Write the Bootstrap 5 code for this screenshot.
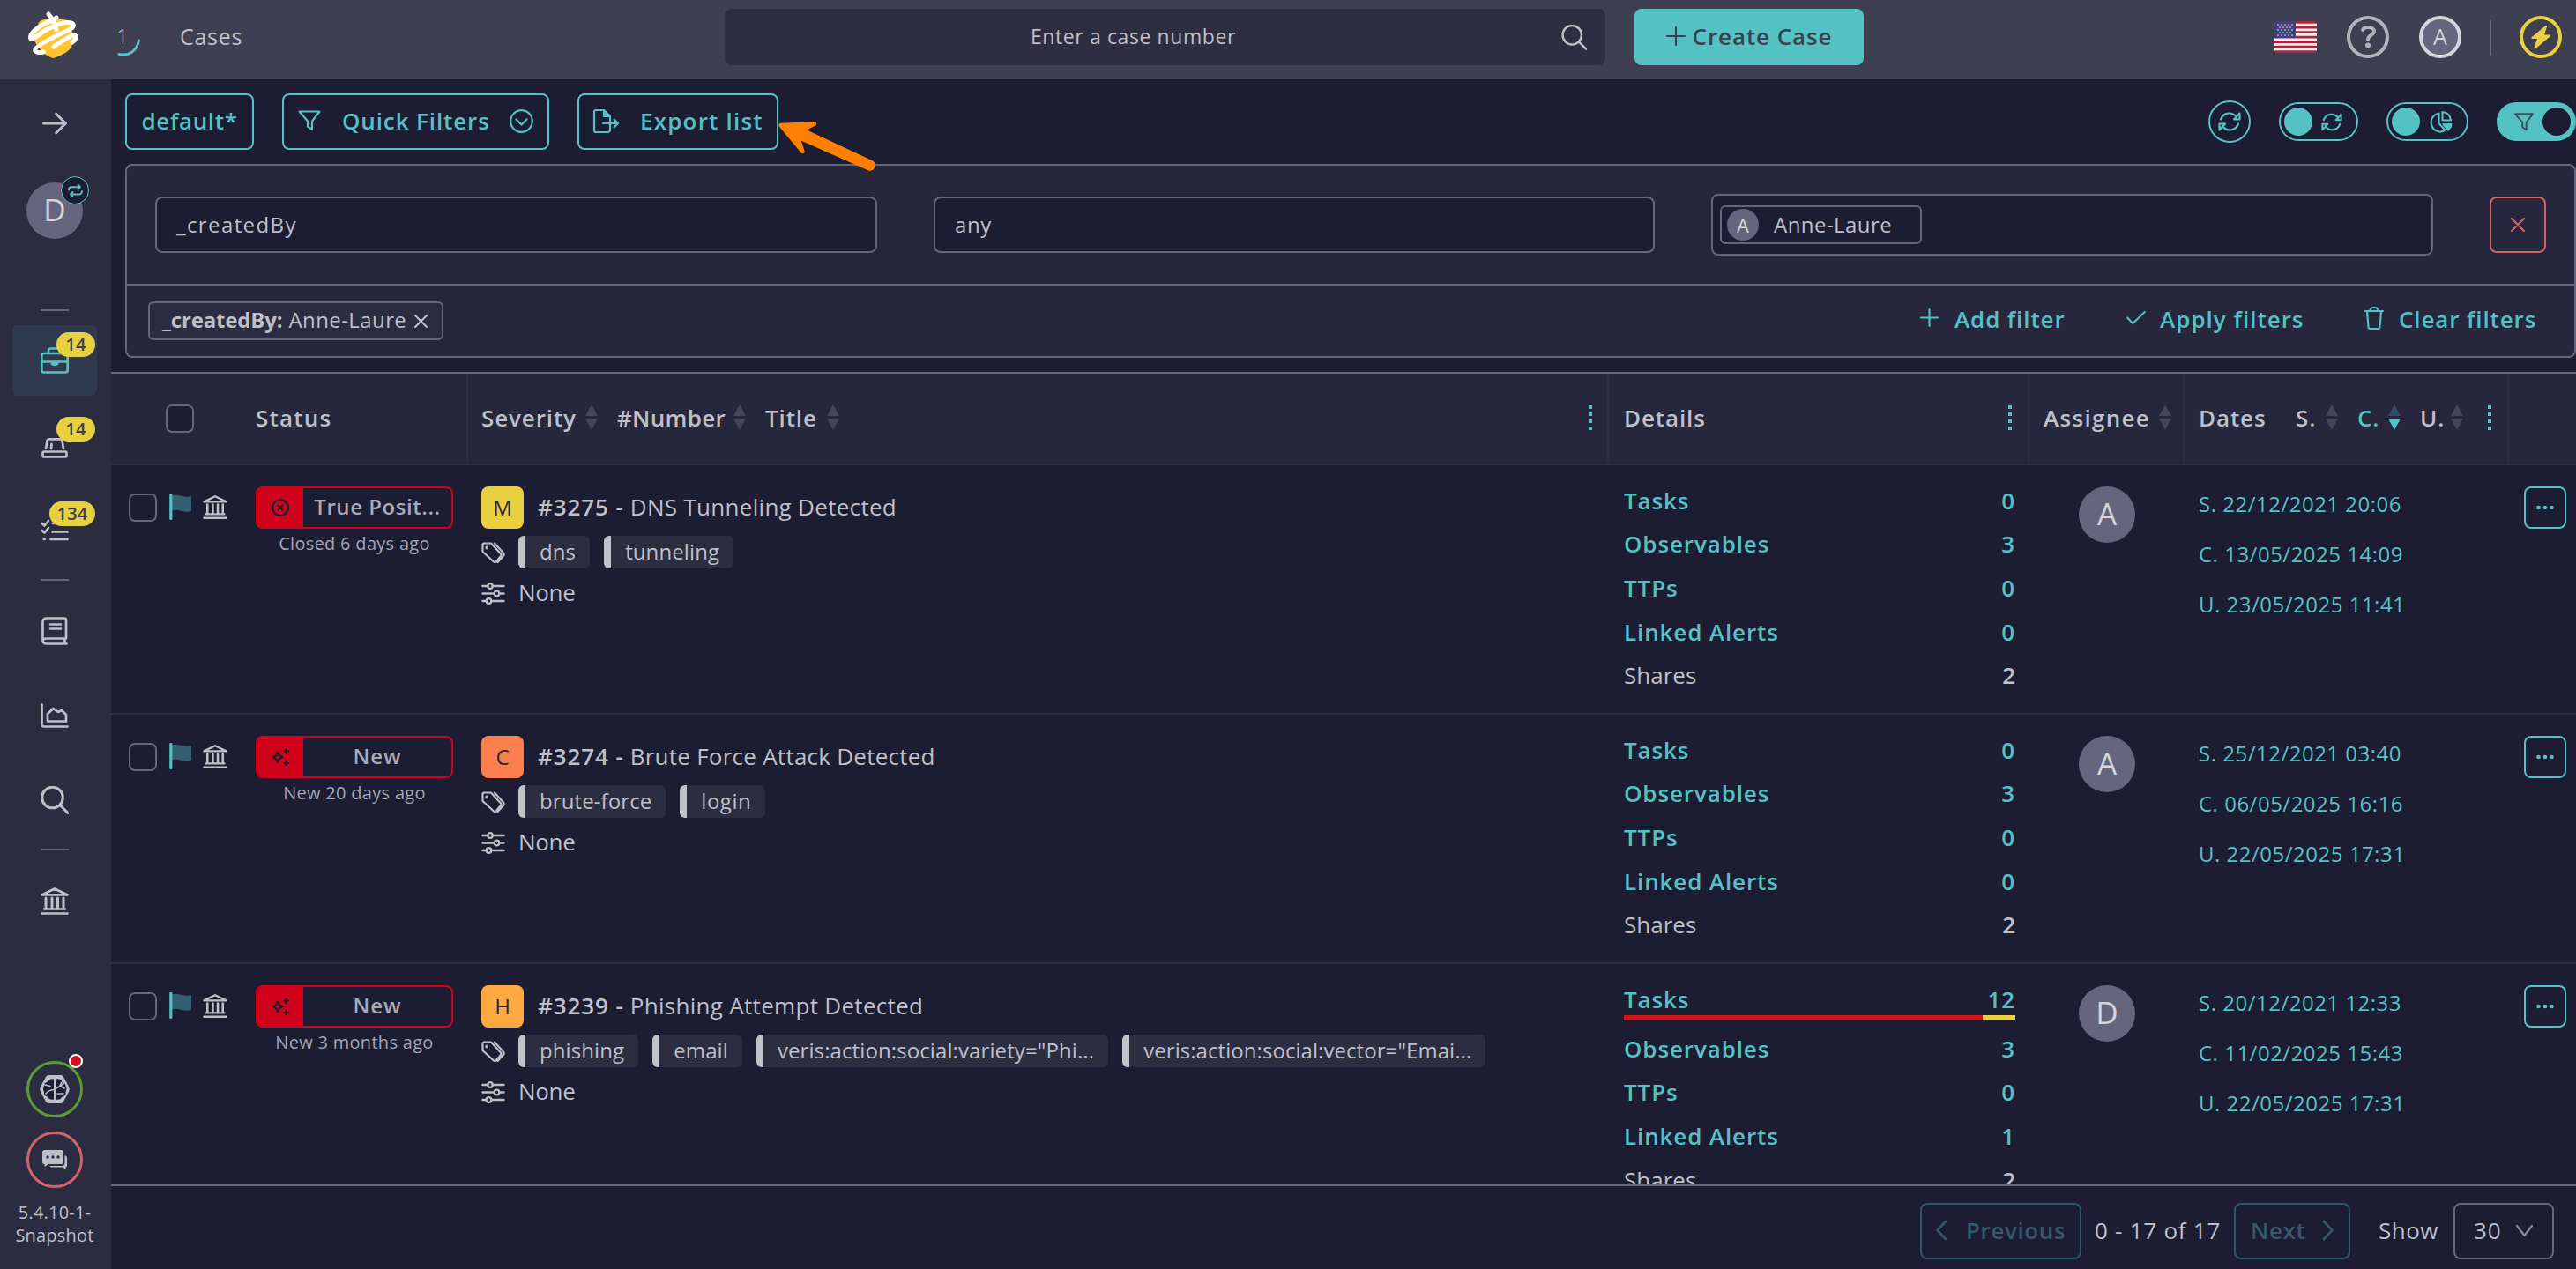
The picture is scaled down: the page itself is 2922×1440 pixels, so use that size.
<!DOCTYPE html>
<html lang="en">
<head>
<meta charset="utf-8">
<title>Cases</title>
<link href="https://cdn.jsdelivr.net/npm/bootstrap@5.3.0/dist/css/bootstrap.min.css" rel="stylesheet">
<style>
:root{--teal:#54c1c3;--ink:#1c1c33;--panel:#26263d;--side:#2c2c40;--line:#65657d;--txt:#bfbfc8;--red:#d0021b}
html,body{height:100%}
body{background:var(--ink);color:var(--txt);font-family:"Open Sans","Noto Sans",sans-serif;font-size:26px;line-height:36px;overflow:hidden}
a,a:hover{color:inherit;text-decoration:none}
svg{display:block;flex:none;fill:none;stroke:currentColor;stroke-width:2.2px;stroke-linecap:round;stroke-linejoin:round;overflow:visible}
svg.mid{stroke-width:2.7px}
svg.heavy{stroke-width:3px}
.teal{color:var(--teal)}
.sb{font-weight:600;letter-spacing:.88px;white-space:nowrap}
.shell{width:2922px;height:1440px}
.topbar{height:90px;background:#3f3f52;flex:none;padding-bottom:6px}
.searchbox{width:999px;height:64px;border-radius:8px;background:#2e2e40;font-size:23px;letter-spacing:.6px;margin-left:545px;padding:0 21px 0 0}
.create{width:260px;height:64px;border-radius:8px;background:var(--teal);color:#3f3f52;margin-left:33px;letter-spacing:.9px;border:0;padding:0 0 2px}
.ring{width:48px;height:48px;border:4px solid;border-radius:50%}
.sidebar{width:126px;background:var(--side);flex:none;position:relative}
.navitem{width:96px;height:80px;margin:0 16px 16px 14px;border-radius:6px;position:relative;flex:none}
.navitem.on{background:#303a4e;color:var(--teal)}
.count{position:absolute;top:8px;right:2px;height:28px;min-width:44px;border-radius:14px;background:#e8d040;color:#3f3f52;font-size:20px;font-weight:600;line-height:27px;padding:0 10px;text-align:center;letter-spacing:.3px}
.count.wide{min-width:52px;padding:0 8px}
.sep{width:32px;height:2px;background:var(--line);margin-left:46px;flex:none}
.face{width:64px;height:64px;border-radius:50%;background:#65657d;color:#d5d5dc;font-size:35px;flex:none;padding-bottom:2px}
.swap{position:absolute;width:32px;height:32px;left:69px;top:110px;border:1.5px solid var(--teal);border-radius:50%;background:var(--ink);color:var(--teal)}
.orb{width:64px;height:64px;border-radius:50%;border:3px solid;margin-left:30px;flex:none}
.alertdot{position:absolute;left:78px;top:1106px;width:16px;height:16px;border-radius:50%;border:2px solid #fff;background:#d0101f}
.ver{font-size:20px;line-height:26px;letter-spacing:.2px;text-align:center;padding-right:2px}
.obtn,a.obtn{height:64px;border:2px solid var(--teal);border-radius:8px;color:var(--teal);flex:none;padding-bottom:2px}
.pillsw{height:44px;border-radius:22px;border:2px solid var(--teal);color:var(--teal);flex:none}
.knob{width:32px;height:32px;border-radius:50%;background:var(--teal)}
.fpanel{width:2780px;height:220px;border:2px solid var(--line);border-radius:8px;background:var(--panel);margin-left:16px;flex:none}
.fin{background:var(--ink);border:2px solid var(--line);border-radius:8px;height:64px;font-size:24px;padding:0 0 1px 22px}
.pill{border:2px solid var(--line);border-radius:6px;height:44px;font-size:24px}
.mini{width:36px;height:36px;border-radius:50%;background:#65657d;color:#d5d5dc;font-size:22px}
.thead-row{height:106px;border-top:2px solid var(--line);border-bottom:2px solid #2f2f43;background:var(--panel);flex:none}
.thead-row>div{height:100%;border-right:2px solid #2d2d41;padding-bottom:3px}
.thead-row>div:last-child,.thead-row .nb{border:0}
.thead-row .nb{padding-bottom:0}
.c1{width:148px;flex:none}.c2{width:257px;flex:none}.c3{width:1294px;flex:none}.c4{width:477px;flex:none}.c5{width:176px;flex:none}.c6{width:368px;flex:none}.c7{width:76px;flex:none}
.c2,.c5,.c6{padding-left:16px}.c3{padding-left:15px}.c4{padding-left:17px}
.cbx{width:32px;height:32px;border:2px solid var(--line);border-radius:7px;flex:none}
.sort{width:14px;height:29px;fill:#44445a;stroke:none}
.dots{width:4px;height:28px;background:repeating-linear-gradient(var(--teal) 0 4px,transparent 4px 8px)}
.case-row{height:283px;border-bottom:2px solid #2d2d41;flex:none}
.status{width:224px;height:48px;border:2px solid var(--red);border-radius:8px;overflow:hidden;font-size:24px;color:#a9a9b8}
.status .lbl{padding-bottom:2px}
.status .ic{width:52px;height:48px;background:var(--red);color:var(--ink)}
.ago{font-size:20px;line-height:28px;width:224px;margin-top:3px;color:#a3a3b3;letter-spacing:.3px}
.sev{width:48px;height:48px;border-radius:8px;color:#2b2b30;font-size:24px;font-weight:500;padding-bottom:1px}
.ttl{letter-spacing:.3px;margin-left:16px;padding-bottom:2px}
.ttl b{font-weight:600;letter-spacing:.9px}
.tg{height:37px;border-left:8px solid #c2c2ca;border-radius:6px;background:#2d2d41;padding:0 16px;font-size:24px;line-height:35px;letter-spacing:.1px}
.none{margin:-2px 0 0 15px;letter-spacing:-.3px}
.details{padding-top:15px}
.kv{height:49.6px;width:444px}
.kv b{font-weight:600}
.bar{width:444px;height:6px;margin:-6.3px 0 6.7px}
.dates{padding-top:15px}
.dt{height:57.2px;font-size:24px;font-weight:500;letter-spacing:.5px}
.more{width:48px;height:48px;border:2px solid var(--teal);border-radius:8px;color:var(--teal);margin-left:17px}
.list{height:816px;overflow:hidden;flex:none}
.foot{height:96px;border-top:2px solid var(--line);padding:8px 25px 0 0;flex:none}
.foot .dim{border-color:#2f5668;color:#35596b}
.pointer{position:absolute;left:870px;top:130px}
</style>
<script src="https://cdn.jsdelivr.net/npm/bootstrap@5.3.0/dist/js/bootstrap.bundle.min.js"></script>
</head>
<body>
<svg width="0" height="0" class="position-absolute">
<symbol id="bank" viewBox="0 0 32 31"><path d="M1.500 8.500 16 1.500l14.500 7zM1.500 29.500h29M4 24.500h24" stroke-width="2.600"/><path d="M6 12v12M13 12v12M19.500 12v12M26 12v12" stroke-width="3"/></symbol>
<symbol id="srt" viewBox="0 0 14 29"><path d="M7 0l7 13H0z"/><path d="M7 29l7-13H0z"/></symbol>
<symbol id="flag" viewBox="0 0 26 30"><path d="M3 2.500c7-3 12 3 22 .5v17c-9 3-14-3-22-.5z" fill="#345f70" stroke="none"/><path d="M1.800 1.500v27" stroke-width="3.200"/></symbol>
<symbol id="tags" viewBox="0 0 27 26"><path d="M1.500 3.500v8.500L14 23.500c1 .8 1.800.8 2.600 0L22 17c.8-1 .8-1.800 0-2.600L11 2.500H3zM15 2.500l10 11c1 1.200 1 2.200 0 3.400L18.500 24"/><circle cx="6.200" cy="7.500" r=".8"/></symbol>
<symbol id="sliders" viewBox="0 0 26 25"><path d="M1 4h6M12 4h13M1 12.500h13M20 12.500h5M1 21h4M11 21h14" stroke-width="2.400"/><circle cx="9.500" cy="4" r="2.800"/><circle cx="17" cy="12.500" r="2.800"/><circle cx="8" cy="21" r="2.800"/></symbol>
<symbol id="spark" viewBox="0 0 20 20"><path d="M7 4.500c.8 3.600 2 4.800 5.500 5.700-3.500.9-4.700 2-5.500 5.700-.8-3.600-2-4.800-5.500-5.700C5 9.300 6.200 8.100 7 4.500zM16.500 1v5M14 3.500h5M16.500 14.500v5M14 17h5"/></symbol>
<symbol id="sync" viewBox="0 0 26 24"><path d="M3 9.500C6 1.500 16 0 21 7M23 14.500C20 22.500 10 24 5 17M24.500 2.500v7h-6.500zM1.500 21.500v-7H8z"/></symbol>
<symbol id="funnel" viewBox="0 0 26 24"><path d="M1.500 1.500h23l-8.500 11v9.500l-5-3.500v-6z"/></symbol>
<symbol id="lens" viewBox="0 0 32 32"><circle cx="13.500" cy="13" r="11.800"/><path d="M22.500 22l8.500 8.500"/></symbol>
<symbol id="ex" viewBox="0 0 16 16"><path d="M1 1l14 14M15 1L1 15"/></symbol>
<symbol id="ell" viewBox="0 0 20 6"><g fill="currentColor" stroke="none"><circle cx="2.500" cy="3" r="2.300"/><circle cx="10" cy="3" r="2.300"/><circle cx="17.500" cy="3" r="2.300"/></g></symbol>
</svg>

<div class="shell d-flex flex-column position-relative">
<header class="topbar d-flex align-items-center">
  <svg width="60" height="54" viewBox="0 0 60 54" style="margin:0 0 2px 31px"><path d="M13 11.500q3-4 9-3.500h18q8 0 10 8l2 15q0 10-9 15-9 5-13.500 6-8-2-15-10-7-8-8-15z" fill="#ffc42e" stroke="none"/><path d="M29 9C18 12 4 22 3.500 28q0 4 6 0C22 18 42 9 50 12q6 3-3 8C36 25 8 38 8.500 43q2 4 10 2M30 39C37 34 49 26 54 26q4 2-3 8" stroke="#fff" stroke-width="5"/><path d="M28 7l-4-5M29 9l4-3M30 10l3 10" stroke="#fff" stroke-width="5"/></svg>
  <div class="d-flex align-items-center" style="margin-left:41px"><span style="font-size:24px;font-weight:300;width:20px;padding-bottom:2px">1</span><svg width="26" height="22" viewBox="0 0 26 22" class="teal" style="margin:22px 0 0 -18px"><path d="M23.500 4C21 16 12 22 1 19.500" stroke-width="3"/></svg></div>
  <span style="margin-left:44px;font-size:25px;letter-spacing:.7px;width:73px;padding-bottom:2px">Cases</span>
  <div class="searchbox d-flex align-items-center"><span class="flex-fill text-center" style="padding:0 22px 2px 0">Enter a case number</span><svg width="29" height="29" class="mid"><use href="#lens"/></svg></div>
  <button class="create sb d-flex align-items-center justify-content-center"><svg width="22" height="22" viewBox="0 0 22 22" class="me-2"><path d="M11 1v20M1 11h20"/></svg>Create Case</button>
  <svg width="48" height="36" viewBox="0 0 48 36" style="margin-left:466px;stroke:none"><rect width="48" height="36" rx="4" fill="#b6203a"/><path d="M0 4.200h48M0 9.800h48M0 15.300h48M0 20.800h48M0 26.400h48M0 31.900h48" stroke="#f0f0f0" stroke-width="2.800" stroke-linecap="butt"/><path d="M0 4q0-4 4-4h20v19H0z" fill="#40407c"/><path d="M4 4h18M6 7h16M4 10h18M6 13h16M4 16h18" stroke="#dcdcec" stroke-width="1.700" stroke-dasharray="0 4"/></svg>
  <svg width="48" height="48" viewBox="0 0 48 48" style="margin-left:34px;color:#b2b2ba"><circle cx="24" cy="24" r="22" stroke-width="4"/><path d="M18 16c1-4 13-4.500 13 1.500 0 4.500-7 4-7 9.500" stroke-width="4"/><circle cx="24" cy="33.500" r="3" fill="currentColor" stroke="none"/></svg>
  <div class="ring d-flex align-items-center justify-content-center" style="margin-left:34px;background:#65657d;color:#d5d5dc;font-size:25px;padding-bottom:2px">A</div>
  <div style="width:2px;height:40px;margin-left:32px;background:#65657a"></div>
  <svg width="48" height="48" viewBox="0 0 48 48" style="margin-left:32px;color:#e8d040"><circle cx="24" cy="24" r="22" stroke-width="4"/><path d="M30 12 14.500 25h7L17.500 36.500 34 22.500h-7.500z" fill="currentColor"/></svg>
</header>

<div class="d-flex flex-fill">
<aside class="sidebar d-flex flex-column">
  <svg width="28" height="26" viewBox="0 0 28 26" style="margin:37px 0 0 48px"><path d="M1.500 13h25M15.500 2l11 11-11 11" stroke-width="3"/></svg>
  <div class="face d-flex align-items-center justify-content-center" style="margin:54px 0 0 30px;font-weight:500">D</div>
  <div class="swap d-flex align-items-center justify-content-center"><svg width="17" height="15" viewBox="0 0 17 15"><path d="M1 6.500c0-2 1-3.300 3-3.300h10M11.500.8 14 3.200l-2.500 2.400M16 8c0 2-1 3.500-3 3.500H3M5.500 14 3 11.500 5.500 9" stroke-width="1.900"/></svg></div>
  <div class="sep" style="margin-top:80px;margin-bottom:16px"></div>
  <a class="navitem on d-flex align-items-center justify-content-center"><svg width="32" height="30" viewBox="0 0 32 30" class="mid"><rect x="1.300" y="7" width="29.400" height="21.500" rx="2.500"/><path d="M9 7V3.500Q9 1.500 11 1.500h10q2 0 2 2V7M1.500 16.500h29"/><path d="M13 17v2q3 2 6 0v-2z" fill="currentColor"/></svg><span class="count">14</span></a>
  <a class="navitem d-flex align-items-center justify-content-center"><svg width="30" height="24" viewBox="0 0 30 24" style="margin-top:8px" class="mid"><rect x="1.500" y="15.500" width="27" height="6" rx="1.500"/><path d="M5 12 6.500 3Q7 1.300 8.500 1.300h13Q23 1.300 23.500 3L25 12M11.500 7 11 12"/></svg><span class="count">14</span></a>
  <a class="navitem d-flex align-items-center justify-content-center"><svg width="32" height="26" viewBox="0 0 32 26" style="margin-top:2px" class="mid"><path d="M1.500 5l3 2.500L9 2M1.500 13l3 2.500L9 10M14 5h16.500M13.500 14.500h17M11.500 23h19M3.800 23h.8"/></svg><span class="count wide">134</span></a>
  <div class="sep" style="margin-bottom:17px"></div>
  <a class="navitem d-flex align-items-center justify-content-center"><svg width="30" height="32" viewBox="0 0 30 32" class="mid"><path d="M28 24V3.500q0-2-2-2H6q-4.500 0-4.500 4.500v20q0 4.500 4.500 4.500h22.500M28 24.500H6q-4.500 0-4.500 3M26.500 25v5M10 8.500h12M10 13.500h12"/></svg></a>
  <a class="navitem d-flex align-items-center justify-content-center"><svg width="32" height="28" viewBox="0 0 32 28" class="mid"><path d="M1.500 1.500V24q0 2.500 2.500 2.500h26.500M8 20.500v-8.500l6.500-6 5.500 4 4-2 5 5v7.500z"/></svg></a>
  <a class="navitem d-flex align-items-center justify-content-center" style="margin-bottom:15px"><svg width="32" height="32" class="heavy"><use href="#lens"/></svg></a>
  <div class="sep" style="margin-bottom:17px"></div>
  <a class="navitem d-flex align-items-center justify-content-center"><svg width="32" height="31"><use href="#bank"/></svg></a>
  <div class="flex-fill"></div>
  <span class="alertdot"></span>
  <div class="orb d-flex align-items-center justify-content-center" style="border-color:#5b9b35"><svg width="34" height="32" viewBox="0 0 34 32"><path d="M10 0h14q2 0 3 2l6 11q1.500 3 0 6l-6 11q-1 2-3 2H10q-2 0-3-2L1 19q-1.500-3 0-6L7 2q1-2 3-2z" fill="#bfbfc8" stroke="none"/><path d="M16 4.500v23q-5 1-7-3-5-1-4-6-2-3 0-6 0-4 4-5 2-4 7-3zM18.500 4.500q5-1 7 3 4 1 4 5 2 3 0 6 1 5-4 6-2 4-7 3z" fill="#1c1c33" stroke="none"/><path d="M6 11l6 1.500M7 21q3-4 9-4.500l7-4M23 12l2-4M28 9l-5 3 5 3M20 21h7" stroke-width="1.600"/></svg></div>
  <div class="orb d-flex align-items-center justify-content-center mt-3" style="border-color:#d16469"><svg width="28" height="22" viewBox="0 0 28 22"><g fill="#bfbfc8" stroke="none"><path d="M2.500 0h19Q24 0 24 2.500v11q0 2.500-2.500 2.500H7l-4.500 3v-3Q0 16 0 13.500v-11Q0 0 2.500 0z"/><path d="M25.500 6q2.500.5 2.500 2.500v8.500q0 2.500-1.500 2.500V22L23 19.500H11Q9 19.500 8.500 18H22q3.500 0 3.500-3.500z"/></g><g fill="#2c2c40" stroke="none"><circle cx="6" cy="8" r="1.700"/><circle cx="12" cy="8" r="1.700"/><circle cx="18" cy="8" r="1.700"/></g></svg></div>
  <div class="ver" style="margin:15px 0 25px">5.4.10-1-<br>Snapshot</div>
</aside>

<main class="d-flex flex-column flex-fill">
  <div class="d-flex align-items-center" style="height:96px;padding-left:16px;flex:none">
    <a class="obtn sb d-flex align-items-center justify-content-center" style="width:146px;letter-spacing:.65px">default*</a>
    <a class="obtn sb d-flex align-items-center" style="width:303px;margin-left:32px;padding-left:16px;padding-right:16px"><svg width="26" height="24"><use href="#funnel"/></svg><span class="flex-fill" style="margin-left:24px">Quick Filters</span><svg width="27" height="27" viewBox="0 0 27 27"><circle cx="13.500" cy="13.500" r="12.300"/><path d="M7.500 11.500l6 6 6-6" stroke-width="2.400"/></svg></a>
    <a class="obtn sb d-flex align-items-center" style="width:228px;margin-left:32px;padding-left:16px"><svg width="29" height="27" viewBox="0 0 29 27"><path d="M19 17v6q0 3-2.500 3H3q-2 0-2-2V3q0-2 2-2h9l7 7v5" /><path d="M12 1l7 7h-7z" fill="currentColor"/><path d="M11 16h17M23.500 11.500 28 16l-4.500 4.500"/></svg><span style="margin-left:24px;letter-spacing:1.2px">Export list</span></a>
    <div class="ms-auto d-flex align-items-center teal">
      <div class="ring d-flex align-items-center justify-content-center" style="border-width:2px"><svg width="26" height="24"><use href="#sync"/></svg></div>
      <div class="pillsw d-flex align-items-center" style="width:90px;margin-left:32px;padding-left:4px"><span class="knob"></span><svg width="24" height="23" style="margin-left:10px"><use href="#sync"/></svg></div>
      <div class="pillsw d-flex align-items-center" style="width:93px;margin-left:32px;padding-left:4px"><span class="knob"></span><svg width="26" height="25" viewBox="0 0 26 25" style="margin-left:11px"><path d="M10.500 2.500C-2 5 -1 22 11 23.500q4 .3 6.500-2l-7-7.500zM14.500 1v9.500H24Q23 2 14.500 1z"/><path d="M15.500 15h9q-.5 4-3.500 6.500z" fill="currentColor"/></svg></div>
      <div class="pillsw d-flex align-items-center" style="width:90px;margin-left:32px;padding-left:17px;background:var(--teal)"><svg width="24" height="21" style="color:#3f4b5c"><use href="#funnel"/></svg><span class="knob" style="margin-left:9px;background:var(--ink)"></span></div>
    </div>
  </div>

  <section class="fpanel d-flex flex-column">
    <div class="d-flex align-items-center" style="height:134px;padding:0 32px">
      <div class="fin d-flex align-items-center" style="width:819px;letter-spacing:1.4px">_createdBy</div>
      <div class="fin d-flex align-items-center" style="width:818px;margin-left:64px;letter-spacing:.6px">any</div>
      <div class="fin d-flex align-items-center" style="width:819px;height:70px;margin-left:64px;padding:0 0 0 8px">
        <span class="pill d-flex align-items-center" style="width:229px;padding-left:6px"><span class="mini d-flex align-items-center justify-content-center">A</span><span style="margin-left:17px;padding-bottom:1px;letter-spacing:.45px">Anne-Laure</span></span></div>
      <button class="ms-auto bg-transparent d-flex align-items-center justify-content-center p-0" style="width:64px;height:64px;border:2px solid #d16469;border-radius:8px;color:#d16469"><svg width="16" height="16"><use href="#ex"/></svg></button>
    </div>
    <div class="d-flex align-items-center flex-fill" style="border-top:2px solid var(--line);padding:0 43px 0 24px">
      <span class="pill d-flex align-items-center" style="width:335px;padding:0 0 2px 14px;background:#2c2c41"><b style="letter-spacing:-.15px">_createdBy:</b><span style="margin-left:7px;letter-spacing:.4px">Anne-Laure</span><svg width="15" height="15" style="margin:2px 0 0 9px"><use href="#ex"/></svg></span>
      <div class="ms-auto d-flex align-items-center teal sb pb-1">
        <svg width="21" height="21" viewBox="0 0 22 22" style="margin-bottom:3px"><path d="M11 1v20M1 11h20"/></svg><span style="margin-left:18px;width:126px">Add filter</span>
        <svg width="22" height="15" viewBox="0 0 23 16" style="margin:0 0 4px 69px"><path d="M1 8l6.500 7L22 1"/></svg><span style="margin-left:16px;width:163px;letter-spacing:1px">Apply filters</span>
        <svg width="22" height="26" viewBox="0 0 22 26" style="margin:0 0 3px 69px"><path d="M1 5h20M3 5l1.500 18q.2 2 2 2h9q1.800 0 2-2L19 5M6.500 4.500q.5-3.500 3-3.500h3q2.500 0 3 3.500"/></svg><span style="margin-left:17px;width:156px">Clear filters</span>
      </div>
    </div>
  </section>

  <div class="thead-row sb d-flex align-items-center mt-3">
    <div class="c1 nb d-flex align-items-center" style="padding-left:62px"><span class="cbx" style="background:var(--ink)"></span></div>
    <div class="c2 d-flex align-items-center" style="letter-spacing:1.2px">Status</div>
    <div class="c3 d-flex align-items-center"><span style="width:118px">Severity</span><svg class="sort"><use href="#srt"/></svg><span style="width:132px;margin-left:22px;letter-spacing:.3px">#Number</span><svg class="sort"><use href="#srt"/></svg><span style="width:70px;margin-left:22px">Title</span><svg class="sort"><use href="#srt"/></svg><span class="dots ms-auto" style="margin-right:17px"></span></div>
    <div class="c4 d-flex align-items-center">Details<span class="dots ms-auto" style="margin-right:18px"></span></div>
    <div class="c5 d-flex align-items-center"><span style="width:131px;letter-spacing:1.3px">Assignee</span><svg class="sort"><use href="#srt"/></svg></div>
    <div class="c6 d-flex align-items-center"><span style="width:110px">Dates</span><span style="width:34px">S.</span><svg class="sort"><use href="#srt"/></svg><span class="teal" style="width:35px;margin-left:22px">C.</span><svg class="sort" viewBox="0 0 14 29"><path d="M7 0l7 13H0z" fill="#304f62"/><path d="M7 29l7-13H0z" fill="#54c1c3"/></svg><span style="width:35px;margin-left:22px">U.</span><svg class="sort"><use href="#srt"/></svg><span class="dots" style="margin-left:28px"></span></div>
    <div class="c7"></div>
  </div>

  <div class="list">
    <article class="case-row d-flex">
      <div class="c1 d-flex align-items-center" style="height:96px;padding-left:20px"><span class="cbx"></span><svg width="26" height="30" class="teal" style="margin-left:14px;margin-bottom:2px"><use href="#flag"/></svg><svg width="28" height="29" style="margin-left:12px;margin-bottom:1px"><use href="#bank"/></svg></div>
      <div class="c2 pt-4"><div class="status sb d-flex align-items-center"><span class="ic d-flex align-items-center justify-content-center"><svg width="20" height="20" viewBox="0 0 20 20"><circle cx="10" cy="10" r="9"/><path d="M7.500 7.500l5 5M12.500 7.500l-5 5"/></svg></span><span class="lbl flex-fill text-center" style="letter-spacing:.55px">True Posit...</span></div><div class="ago text-center">Closed 6 days ago</div></div>
      <div class="c3 pt-4">
        <div class="d-flex align-items-center"><span class="sev d-flex align-items-center justify-content-center" style="background:#e8d040">M</span><span class="ttl"><b>#3275 -</b> DNS Tunneling Detected</span></div>
        <div class="d-flex align-items-center gap-3 mt-2"><svg width="27" height="26"><use href="#tags"/></svg><span class="tg" style="margin-left:-1px">dns</span><span class="tg">tunneling</span></div>
        <div class="d-flex align-items-center" style="margin-top:11px"><svg width="27" height="25"><use href="#sliders"/></svg><span class="none">None</span></div>
      </div>
      <div class="c4 details">
        <div class="kv sb teal d-flex align-items-center justify-content-between">Tasks<b>0</b></div>
        <div class="kv sb teal d-flex align-items-center justify-content-between">Observables<b>3</b></div>
        <div class="kv sb teal d-flex align-items-center justify-content-between">TTPs<b>0</b></div>
        <div class="kv sb teal d-flex align-items-center justify-content-between">Linked Alerts<b>0</b></div>
        <div class="kv d-flex align-items-center justify-content-between">Shares<b>2</b></div>
      </div>
      <div class="c5 pt-4"><div class="face d-flex align-items-center justify-content-center" style="margin-left:40px">A</div></div>
      <div class="c6 dates teal"><div class="dt d-flex align-items-center">S. 22/12/2021 20:06</div><div class="dt d-flex align-items-center">C. 13/05/2025 14:09</div><div class="dt d-flex align-items-center">U. 23/05/2025 11:41</div></div>
      <div class="c7 pt-4"><div class="more d-flex align-items-center justify-content-center"><svg width="20" height="6"><use href="#ell"/></svg></div></div>
    </article>

    <article class="case-row d-flex">
      <div class="c1 d-flex align-items-center" style="height:96px;padding-left:20px"><span class="cbx"></span><svg width="26" height="30" class="teal" style="margin-left:14px;margin-bottom:2px"><use href="#flag"/></svg><svg width="28" height="29" style="margin-left:12px;margin-bottom:1px"><use href="#bank"/></svg></div>
      <div class="c2 pt-4"><div class="status sb d-flex align-items-center"><span class="ic d-flex align-items-center justify-content-center"><svg width="20" height="20"><use href="#spark"/></svg></span><span class="lbl flex-fill text-center">New</span></div><div class="ago text-center">New 20 days ago</div></div>
      <div class="c3 pt-4">
        <div class="d-flex align-items-center"><span class="sev d-flex align-items-center justify-content-center" style="background:#fd7f4f">C</span><span class="ttl" style="letter-spacing:.25px"><b>#3274 -</b> Brute Force Attack Detected</span></div>
        <div class="d-flex align-items-center gap-3 mt-2"><svg width="27" height="26"><use href="#tags"/></svg><span class="tg" style="margin-left:-1px">brute-force</span><span class="tg" style="letter-spacing:.5px">login</span></div>
        <div class="d-flex align-items-center" style="margin-top:11px"><svg width="27" height="25"><use href="#sliders"/></svg><span class="none">None</span></div>
      </div>
      <div class="c4 details">
        <div class="kv sb teal d-flex align-items-center justify-content-between">Tasks<b>0</b></div>
        <div class="kv sb teal d-flex align-items-center justify-content-between">Observables<b>3</b></div>
        <div class="kv sb teal d-flex align-items-center justify-content-between">TTPs<b>0</b></div>
        <div class="kv sb teal d-flex align-items-center justify-content-between">Linked Alerts<b>0</b></div>
        <div class="kv d-flex align-items-center justify-content-between">Shares<b>2</b></div>
      </div>
      <div class="c5 pt-4"><div class="face d-flex align-items-center justify-content-center" style="margin-left:40px">A</div></div>
      <div class="c6 dates teal"><div class="dt d-flex align-items-center">S. 25/12/2021 03:40</div><div class="dt d-flex align-items-center">C. 06/05/2025 16:16</div><div class="dt d-flex align-items-center">U. 22/05/2025 17:31</div></div>
      <div class="c7 pt-4"><div class="more d-flex align-items-center justify-content-center"><svg width="20" height="6"><use href="#ell"/></svg></div></div>
    </article>

    <article class="case-row d-flex">
      <div class="c1 d-flex align-items-center" style="height:96px;padding-left:20px"><span class="cbx"></span><svg width="26" height="30" class="teal" style="margin-left:14px;margin-bottom:2px"><use href="#flag"/></svg><svg width="28" height="29" style="margin-left:12px;margin-bottom:1px"><use href="#bank"/></svg></div>
      <div class="c2 pt-4"><div class="status sb d-flex align-items-center"><span class="ic d-flex align-items-center justify-content-center"><svg width="20" height="20"><use href="#spark"/></svg></span><span class="lbl flex-fill text-center">New</span></div><div class="ago text-center">New 3 months ago</div></div>
      <div class="c3 pt-4">
        <div class="d-flex align-items-center"><span class="sev d-flex align-items-center justify-content-center" style="background:#ffa940">H</span><span class="ttl"><b>#3239 -</b> Phishing Attempt Detected</span></div>
        <div class="d-flex align-items-center gap-3 mt-2"><svg width="27" height="26"><use href="#tags"/></svg><span class="tg" style="margin-left:-1px">phishing</span><span class="tg">email</span><span class="tg">veris:action:social:variety="Phi...</span><span class="tg" style="letter-spacing:.06px">veris:action:social:vector="Emai...</span></div>
        <div class="d-flex align-items-center" style="margin-top:11px"><svg width="27" height="25"><use href="#sliders"/></svg><span class="none">None</span></div>
      </div>
      <div class="c4 details">
        <div class="kv sb teal d-flex align-items-center justify-content-between">Tasks<b>12</b></div>
        <div class="bar d-flex"><div style="width:91.700%;background:#d0151f"></div><div class="flex-fill" style="background:#e8d040"></div></div>
        <div class="kv sb teal d-flex align-items-center justify-content-between">Observables<b>3</b></div>
        <div class="kv sb teal d-flex align-items-center justify-content-between">TTPs<b>0</b></div>
        <div class="kv sb teal d-flex align-items-center justify-content-between">Linked Alerts<b>1</b></div>
        <div class="kv d-flex align-items-center justify-content-between">Shares<b>2</b></div>
      </div>
      <div class="c5 pt-4"><div class="face d-flex align-items-center justify-content-center" style="margin-left:40px">D</div></div>
      <div class="c6 dates teal"><div class="dt d-flex align-items-center">S. 20/12/2021 12:33</div><div class="dt d-flex align-items-center">C. 11/02/2025 15:43</div><div class="dt d-flex align-items-center">U. 22/05/2025 17:31</div></div>
      <div class="c7 pt-4"><div class="more d-flex align-items-center justify-content-center"><svg width="20" height="6"><use href="#ell"/></svg></div></div>
    </article>
  </div>

  <footer class="foot sb d-flex align-items-center justify-content-end">
    <a class="obtn dim d-flex align-items-center" style="width:183px;padding-left:16px;letter-spacing:.6px"><svg width="12" height="22" viewBox="0 0 12 22" class="mid"><path d="M11 1 1.500 11 11 21"/></svg><span style="margin-left:22px">Previous</span></a>
    <span class="text-center" style="width:173px;padding-bottom:2px;font-weight:500;letter-spacing:.75px">0 - 17 of 17</span>
    <a class="obtn dim d-flex align-items-center" style="width:132px;padding-left:17px;letter-spacing:.6px">Next<svg width="12" height="22" viewBox="0 0 12 22" class="ms-auto mid" style="margin-right:17px"><path d="M1 1l9.500 10L1 21"/></svg></a>
    <span style="width:85px;margin-left:32px;padding-bottom:2px;font-weight:500;letter-spacing:.5px">Show</span>
    <span class="obtn d-flex align-items-center" style="width:114px;padding-left:21px;border-color:var(--line);color:var(--txt);font-weight:500">30<svg width="19" height="13" viewBox="0 0 19 13" class="ms-auto" style="margin-right:22px;color:#8a8a9c"><path d="M1 1l8.500 11L18 1"/></svg></span>
  </footer>
</main>
</div>

<svg class="pointer" width="130" height="70" viewBox="870 130 130 70"><path d="M885.500 142 924 140.500 910 147.500 989 184.500a4 4 0 0 1-3 7L905 155.500 910.500 172z" fill="#ff8000" stroke="#ff8000" stroke-width="4.500"/></svg>
</div>
</body>
</html>
